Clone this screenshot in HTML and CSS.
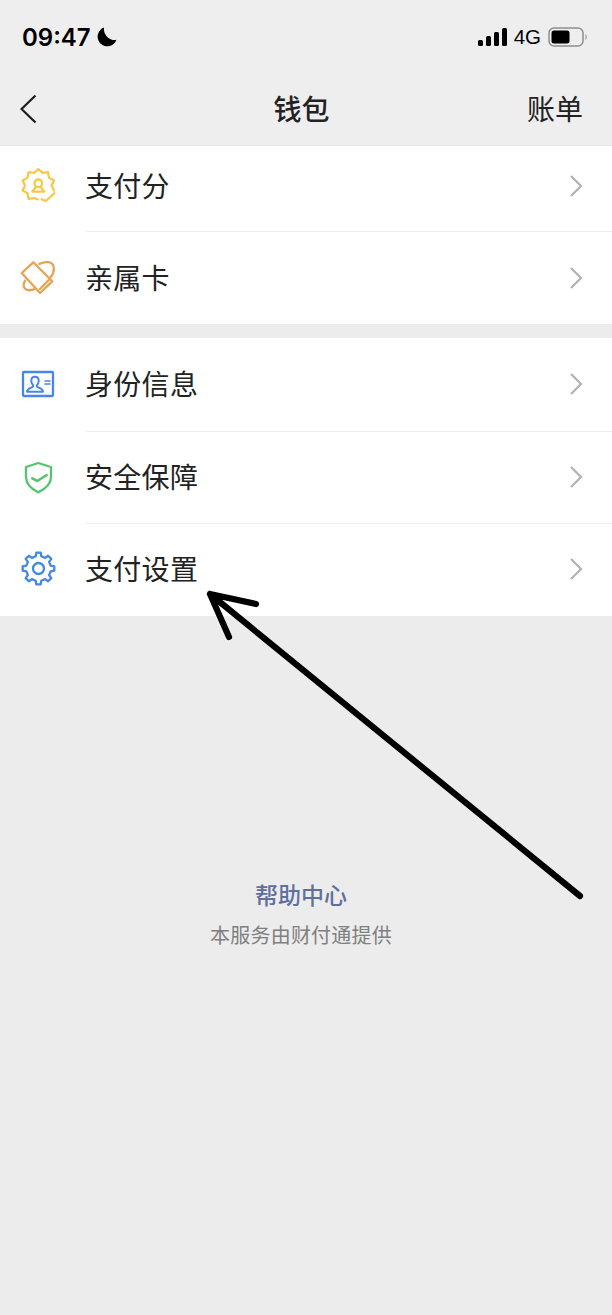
FILE: index.html
```html
<!DOCTYPE html>
<html lang="zh-CN">
<head>
  <meta charset="UTF-8">
  <meta name="viewport" content="width=device-width, initial-scale=1.0">
  <title>钱包</title>
  <link rel="stylesheet" href="styles.css">
</head>
<body>
  <div class="phone">
    <div class="top">
      <div class="status-bar">
        <div class="status-left">
          <span class="time">09:47</span>
          <svg class="moon" width="20" height="20" viewBox="0 0 20 20"><path d="M7 .5a9.700 9.700 0 1 0 12.500 12.300C13.500 14.300 6 8.500 7 .5z" fill="#000"/></svg>
        </div>
        <div class="status-right">
          <svg width="29" height="18" viewBox="0 0 29 18"><rect x="0" y="12" width="5" height="6" rx="1.500" fill="#000"/><rect x="8" y="8" width="5" height="10" rx="1.500" fill="#000"/><rect x="16" y="4" width="5" height="14" rx="1.500" fill="#000"/><rect x="24" y="0" width="5" height="18" rx="1.500" fill="#000"/></svg>
          <span class="net">4G</span>
          <svg width="40" height="20" viewBox="0 0 40 20"><rect x="1" y="1" width="34" height="18" rx="5" fill="none" stroke="#8e8e8e" stroke-width="1.500"/><rect x="3.500" y="3.500" width="18" height="13" rx="2.500" fill="#000"/><path d="M37.500 7c1.500.6 1.500 5.400 0 6z" fill="#8e8e8e"/></svg>
        </div>
      </div>
      <div class="nav-bar">
        <svg class="back" width="18" height="30" viewBox="0 0 18 30"><path d="M15.500 1.500 1.500 15l14 13.500" fill="none" stroke="#1c1c1c" stroke-width="2.200"/></svg>
        <h1>钱包</h1>
        <span class="nav-action">账单</span>
      </div>
    </div>

    <ul class="group">
      <li class="row row-short">
        <svg class="icon" width="36" height="36" viewBox="0 0 36 36" fill="none" stroke="#f6ca48" stroke-width="2.300" stroke-linejoin="round" stroke-linecap="round">
          <path d="M34 22.600 31.600 17.500 34 12.400 29 9.700 28 4.200 22.400 4.900 18.300 1 14.200 4.900 8.600 4.200 7.500 9.700 2.600 12.400 5 17.500 2.600 22.600 7.500 25.300 8.600 30.900 14.200 30.200 18 31.500"/>
          <circle cx="18.300" cy="15.300" r="3.800"/>
          <path d="M15.700 19.300 12.300 23.700H24.300L21 19.300"/>
          <path d="M21.700 31.300 25.700 33 34.300 25.300"/>
        </svg>
        <span class="label">支付分</span>
        <svg class="chevron" width="14" height="24" viewBox="0 0 14 24"><path d="M2 2l10 10L2 22" fill="none" stroke="#b2b2b2" stroke-width="2.200"/></svg>
      </li>
      <li class="row">
        <svg class="icon" width="36" height="36" viewBox="0 0 36 36" fill="none" stroke="#e8a352" stroke-width="2.300" stroke-linejoin="round" stroke-linecap="round">
          <path d="M13.300 2.300 32.300 21.300 20 33 1.700 13z"/>
          <path d="M29 19.700 20 29"/>
          <path d="M19.300 4C25 1 32 1.500 33.500 6 35 11 32 16 30 18"/>
          <path d="M5 20.700C2 26 4 33 15 29"/>
        </svg>
        <span class="label">亲属卡</span>
        <svg class="chevron" width="14" height="24" viewBox="0 0 14 24"><path d="M2 2l10 10L2 22" fill="none" stroke="#b2b2b2" stroke-width="2.200"/></svg>
      </li>
    </ul>

    <ul class="group second">
      <li class="row">
        <svg class="icon" width="36" height="36" viewBox="0 0 36 36" fill="none" stroke="#4487e6" stroke-width="2.300" stroke-linejoin="round" stroke-linecap="round">
          <rect x="3" y="6" width="30" height="24" rx="1"/>
          <path d="M7 25.700c0-3 2.500-3.500 5-4.500 1.500-.6 1.500-1.500.5-2.800-1-1.200-1.200-2.500-1.200-3.700 0-2.500 1.400-3.900 3.700-3.900s3.700 1.400 3.700 3.900c0 1.200-.2 2.500-1.200 3.700-1 1.300-1 2.200.5 2.800 2.500 1 5 1.500 5 4.500z" stroke-width="2"/>
          <path d="M25 15h5M25 18h5" stroke-width="1.600"/>
        </svg>
        <span class="label">身份信息</span>
        <svg class="chevron" width="14" height="24" viewBox="0 0 14 24"><path d="M2 2l10 10L2 22" fill="none" stroke="#b2b2b2" stroke-width="2.200"/></svg>
      </li>
      <li class="row">
        <svg class="icon" width="36" height="36" viewBox="0 0 36 36" fill="none" stroke="#55c46e" stroke-width="2.300" stroke-linejoin="round" stroke-linecap="round">
          <path d="M18.300 4 31 8v10c0 7-6 12-12.700 15.300C11.500 30 6 25 6 18V8z"/>
          <path d="M12.300 19.300 17.300 22 26.700 16" stroke-width="2.600"/>
        </svg>
        <span class="label">安全保障</span>
        <svg class="chevron" width="14" height="24" viewBox="0 0 14 24"><path d="M2 2l10 10L2 22" fill="none" stroke="#b2b2b2" stroke-width="2.200"/></svg>
      </li>
      <li class="row">
        <svg class="icon" width="36" height="36" viewBox="0 0 36 36" fill="none" stroke="#4487e6" stroke-width="2.300" stroke-linejoin="round">
          <path d="M15.700 5.300 16.300 1.700H20.700L21.300 5.300 25.100 6.900 28.100 4.700 31.300 7.900 29.100 10.900 30.700 14.700 34.300 15.300V19.700L30.700 20.300 29.100 24.100 31.300 27.100 28.100 30.300 25.100 28.100 21.300 29.700 20.700 33.300H16.300L15.700 29.700 11.900 28.100 8.900 30.300 5.700 27.100 7.900 24.100 6.300 20.300 2.700 19.700V15.300L6.300 14.700 7.900 10.900 5.700 7.900 8.900 4.700 11.900 6.900z"/>
          <circle cx="18.500" cy="17.500" r="5.500"/>
        </svg>
        <span class="label">支付设置</span>
        <svg class="chevron" width="14" height="24" viewBox="0 0 14 24"><path d="M2 2l10 10L2 22" fill="none" stroke="#b2b2b2" stroke-width="2.200"/></svg>
      </li>
    </ul>

    <div class="footer">
      <a class="help">帮助中心</a>
      <p class="provider">本服务由财付通提供</p>
    </div>

    <svg class="arrow" width="612" height="1315" viewBox="0 0 612 1315">
      <path d="M580 896 210 594M256 604 210 594 229 637" fill="none" stroke="#000" stroke-width="6.200" stroke-linecap="round" stroke-linejoin="round"/>
    </svg>
  </div>
</body>
</html>
```

FILE: styles.css
```css
* {
  margin: 0;
  padding: 0;
  box-sizing: border-box;
}

body {
  background: #ececed;
  font-family: "Liberation Sans", "Noto Sans CJK SC", sans-serif;
  color: #222;
}

.phone {
  position: relative;
  width: 612px;
  height: 1315px;
  overflow: hidden;
  display: flex;
  flex-direction: column;
}

.top {
  height: 146px;
  background: #eeeeef;
  border-bottom: 1px solid #e8e8e8;
}

.status-bar {
  height: 76px;
  padding: 0 24px 2px 22px;
  display: flex;
  justify-content: space-between;
  align-items: center;
}

.status-left {
  display: flex;
  align-items: center;
  gap: 6px;
}

.time {
  font-family: Inter, "Liberation Sans", sans-serif;
  font-size: 24px;
  font-weight: 600;
  color: #000;
}

.status-right {
  display: flex;
  align-items: center;
  gap: 7px;
}

.net {
  font-size: 20.5px;
  color: #000;
}

.nav-bar {
  height: 69px;
  padding: 0 29px 3px 20px;
  display: grid;
  grid-template-columns: 1fr auto 1fr;
  align-items: center;
}

.nav-bar h1 {
  font-size: 28px;
  font-weight: 500;
  margin-bottom: 2px;
}

.nav-action {
  font-size: 28px;
  margin-bottom: 2px;
  justify-self: end;
}

.group {
  list-style: none;
  background: #fff;
}

.group.second {
  margin-top: 14px;
}

.group.second .row {
  height: 92.5px;
}

.row {
  height: 93px;
  padding: 0 29px 0 20px;
  display: flex;
  align-items: center;
  position: relative;
}

.row-short {
  height: 85px;
  padding-bottom: 5px;
}

.row + .row::before {
  content: "";
  position: absolute;
  top: 0;
  left: 85px;
  right: 0;
  height: 1px;
  background: #efefef;
}

.icon {
  flex: none;
}

.label {
  margin: 0 0 2px 29px;
  font-size: 28px;
  letter-spacing: .3px;
  flex: 1;
}

.footer {
  margin-top: 261.5px;
  text-align: center;
  padding-right: 10px;
}

.help {
  display: block;
  font-size: 23px;
  font-weight: 500;
  color: #5f6f9e;
}

.provider {
  margin-top: 9px;
  font-size: 20px;
  letter-spacing: .2px;
  color: #7f7f7f;
}

.arrow {
  position: absolute;
  top: 0;
  left: 0;
}
```
